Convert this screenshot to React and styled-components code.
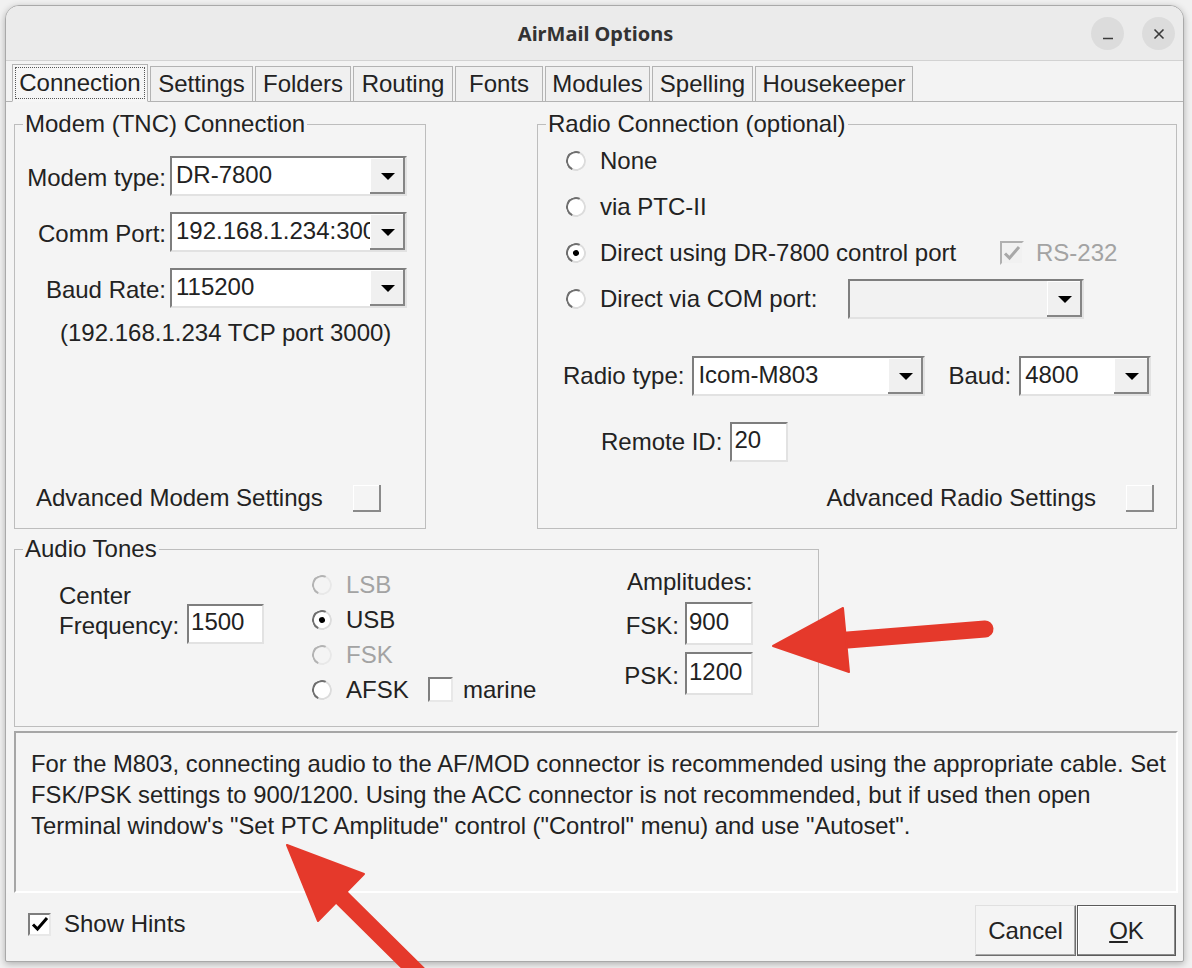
import React from "react";
import styled, { createGlobalStyle } from "styled-components";

const GlobalStyle = createGlobalStyle`
  html, body {
    margin: 0;
    padding: 0;
    background: #f1f1f1;
  }
  body {
    font-family: "Liberation Sans", Arial, sans-serif;
    color: #222;
  }
`;

const Desktop = styled.div`
  position: relative;
  width: 1192px;
  height: 968px;
  overflow: hidden;
  padding: 5px 0 0 5px;
  box-sizing: border-box;
`;

const Window = styled.div`
  width: 1179px;
  height: 957px;
  box-sizing: border-box;
  border: 1px solid #a9a9a9;
  border-radius: 14px 14px 2px 2px;
  background: #f3f3f3;
  box-shadow: 0 2px 7px rgba(0, 0, 0, 0.28);
  display: flex;
  flex-direction: column;
  overflow: hidden;
`;

const TitleBar = styled.div`
  position: relative;
  height: 55px;
  flex: none;
  box-sizing: border-box;
  background: #ebebeb;
  border-bottom: 1px solid #d2d2d2;
  display: flex;
  align-items: center;
  justify-content: center;
`;

const Title = styled.span`
  font-family: "Noto Sans", "Open Sans", sans-serif;
  font-weight: 700;
  font-size: 20px;
  color: #333;
  margin-left: 2px;
`;

const TitleButtons = styled.div`
  position: absolute;
  right: 8px;
  top: 11px;
  display: flex;
  gap: 18px;
`;

const RoundButton = styled.span`
  width: 33px;
  height: 33px;
  border-radius: 50%;
  background: #dcdcdc;
  display: flex;
  align-items: center;
  justify-content: center;
`;

const TabStrip = styled.div`
  height: 40px;
  flex: none;
  display: flex;
  align-items: flex-end;
  gap: 2px;
  padding-left: 6px;
  position: relative;
  z-index: 1;
`;

const Tab = styled.div`
  width: ${(p) => p.$w}px;
  height: ${(p) => (p.$active ? 38 : 35)}px;
  box-sizing: border-box;
  border: 1px solid #b3b3b3;
  border-bottom: ${(p) => (p.$active ? "1px solid #f6f6f6" : "none")};
  margin-bottom: ${(p) => (p.$active ? -1 : 0)}px;
  background: ${(p) => (p.$active ? "#f6f6f6" : "#f0f0f0")};
  font-size: 24px;
  display: flex;
  align-items: center;
  justify-content: center;
  padding: 2px;
`;

const FocusRing = styled.span`
  flex: 1;
  align-self: stretch;
  display: flex;
  align-items: center;
  justify-content: center;
  border: 1px dotted #555;
`;

const TabPage = styled.div`
  border-top: 1px solid #b3b3b3;
  background: #f4f4f4;
  padding: 10px 0 0 8px;
  display: flex;
  flex-direction: column;
  height: 792px;
  box-sizing: border-box;
  flex: none;
`;

const TopRow = styled.div`
  display: flex;
  gap: 111px;
`;

const Group = styled.fieldset`
  margin: ${(p) => p.$mt || 0}px 0 0 0;
  padding: 0;
  min-width: 0;
  width: ${(p) => p.$w}px;
  height: ${(p) => p.$h}px;
  box-sizing: border-box;
  border: 1px solid #bdbdbd;
`;

const Legend = styled.legend`
  font-size: 24px;
  line-height: 24px;
  padding: 0 2px;
  margin-left: 8px;
`;

const GroupBody = styled.div`
  height: ${(p) => p.$h}px;
  display: flex;
  flex-direction: ${(p) => (p.$row ? "row" : "column")};
  align-items: ${(p) => (p.$row ? "flex-start" : "stretch")};
  font-size: 24px;
  white-space: nowrap;
`;

const FieldGrid = styled.div`
  display: grid;
  grid-template-columns: 151px 237px;
  column-gap: 4px;
  row-gap: 16px;
  align-items: center;
  margin-top: 20px;
`;

const FieldLabel = styled.span`
  text-align: right;
  padding-top: 4px;
`;

const Caption = styled.div`
  margin: 12px 0 0 45px;
  line-height: 26px;
`;

const BottomRow = styled.div`
  margin-top: auto;
  padding: 0 ${(p) => p.$pr}px 16px ${(p) => p.$pl || 0}px;
  display: flex;
  align-items: center;
  justify-content: ${(p) => (p.$end ? "flex-end" : "space-between")};
  gap: 30px;
`;

const Combo = styled.div`
  width: ${(p) => p.$w}px;
  height: 40px;
  box-sizing: border-box;
  display: flex;
  border: 2px solid;
  border-color: #7e7e7e #e2e2e2 #e2e2e2 #7e7e7e;
  background: ${(p) => (p.$disabled ? "#f2f2f2" : "#fff")};
`;

const ComboText = styled.span`
  flex: 1;
  min-width: 0;
  overflow: hidden;
  white-space: nowrap;
  padding-left: 4px;
  line-height: 34px;
`;

const ComboButton = styled.span`
  width: 35px;
  flex: none;
  background: #f0f0f0;
  box-shadow: inset -2px -2px 0 #858585, inset 1px 1px 0 #fff;
  display: flex;
  align-items: center;
  justify-content: center;

  &::after {
    content: "";
    border-left: 7px solid transparent;
    border-right: 7px solid transparent;
    border-top: 7px solid #000;
    margin-top: 1px;
  }
`;

const TextBox = styled.div`
  width: ${(p) => p.$w}px;
  height: ${(p) => p.$h || 40}px;
  box-sizing: border-box;
  border: 2px solid;
  border-color: #7e7e7e #e2e2e2 #e2e2e2 #7e7e7e;
  background: #fff;
  padding-left: 2px;
  line-height: ${(p) => (p.$h || 40) - 8}px;
  margin-bottom: ${(p) => p.$mb || 0}px;
`;

const RadioList = styled.div`
  margin: ${(p) => p.$mt}px 0 0 ${(p) => p.$ml}px;
  width: ${(p) => p.$w || "auto"};
  display: flex;
  flex-direction: column;
`;

const OptionRow = styled.div`
  height: ${(p) => p.$h}px;
  display: flex;
  align-items: center;
`;

const RadioDot = styled.span`
  position: relative;
  width: 20px;
  height: 20px;
  flex: none;
  box-sizing: border-box;
  border-radius: 50%;
  border: 2px solid;
  border-color: ${(p) =>
    p.$dim ? "#b3b3b3 #e8e8e8 #e8e8e8 #b3b3b3" : "#6f6f6f #dcdcdc #dcdcdc #6f6f6f"};
  background: ${(p) => (p.$dim ? "#f4f4f4" : "#fff")};
  transform: rotate(-20deg);

  &::after {
    content: "";
    display: ${(p) => (p.$on ? "block" : "none")};
    position: absolute;
    left: 5px;
    top: 5px;
    width: 6px;
    height: 6px;
    border-radius: 50%;
    background: #000;
  }
`;

const OptionText = styled.span`
  margin-left: ${(p) => p.$ml ?? 14}px;
  white-space: nowrap;
  width: ${(p) => (p.$w ? `${p.$w}px` : "auto")};
  color: ${(p) => (p.$dim ? "#a3a3a3" : "inherit")};
`;

const CheckBox = styled.span`
  width: ${(p) => p.$s || 24}px;
  height: ${(p) => p.$s || 24}px;
  flex: none;
  box-sizing: border-box;
  border: 2px solid;
  border-color: ${(p) =>
    p.$dim ? "#b0b0b0 #f4f4f4 #f4f4f4 #b0b0b0" : "#7e7e7e #e8e8e8 #e8e8e8 #7e7e7e"};
  background: ${(p) => (p.$dim ? "#f1f1f1" : "#fff")};
  display: flex;
  align-items: center;
  justify-content: center;
`;

const SquareButton = styled.span`
  width: 28px;
  height: 27px;
  flex: none;
  background: #f4f4f4;
  box-shadow: inset -2px -2px 0 #8a8a8a, inset 1px 1px 0 #fff;
`;

const ControlRow = styled.div`
  display: flex;
  align-items: center;
  margin: ${(p) => p.$mt}px 0 0 ${(p) => p.$ml}px;
  gap: 8px;
`;

const Spacer = styled.span`
  width: ${(p) => p.$w}px;
  flex: none;
`;

const FreqBlock = styled.div`
  width: 253px;
  margin: 20px 0 0 44px;
  display: flex;
  align-items: flex-end;
  gap: 8px;
`;

const FreqLabel = styled.div`
  line-height: 30px;
`;

const AmpBlock = styled.div`
  margin-top: 8px;
  display: grid;
  grid-template-columns: 59px 68px;
  column-gap: 6px;
  row-gap: 7px;
  align-items: center;
`;

const AmpTitle = styled.div`
  grid-column: 1 / span 2;
  line-height: 26px;
  margin-left: 7px;
`;

const HintBox = styled.div`
  margin-top: 4px;
  width: 1164px;
  height: 162px;
  box-sizing: border-box;
  border: 2px solid;
  border-color: #a6a6a6 #fff #fff #a6a6a6;
  background: #f4f4f4;
  padding: 15px 0 0 15px;
  font-size: 23.8px;
  line-height: 31px;
  white-space: nowrap;
`;

const Footer = styled.div`
  flex: 1;
  display: flex;
  justify-content: space-between;
  align-items: flex-start;
  padding: 0 7px 0 22px;
  font-size: 24px;
`;

const ShowHints = styled.label`
  margin-top: 17px;
  display: flex;
  align-items: center;
  gap: 13px;
`;

const ButtonRow = styled.div`
  margin-top: 12px;
  display: flex;
  gap: 1px;
`;

const PushButton = styled.button`
  width: ${(p) => p.$w}px;
  height: 51px;
  font: inherit;
  font-size: 24px;
  color: #222;
  background: #f4f4f4;
  border: 1px solid;
  border-color: ${(p) => (p.$default ? "#5a5a5a" : "#e0e0e0 #6e6e6e #6e6e6e #e0e0e0")};
  box-shadow: ${(p) =>
    p.$default ? "inset -1px -1px 0 #8a8a8a, inset 1px 1px 0 #fff" : "inset -1px -1px 0 #a8a8a8"};
  padding: 0;
`;

const Arrows = styled.svg`
  position: absolute;
  left: 0;
  top: 0;
  pointer-events: none;
`;

const Check = ({ color = "#000" }) => (
  <svg width="18" height="18" viewBox="0 0 18 18">
    <path d="M2 9.5 L6.5 14 L16 3" fill="none" stroke={color} strokeWidth="3" />
  </svg>
);

const Radio = ({ on, dim, label, w }) => (
  <>
    <RadioDot $on={on} $dim={dim} />
    <OptionText $dim={dim} $w={w}>
      {label}
    </OptionText>
  </>
);

const tabs = [
  { label: "Connection", w: 136 },
  { label: "Settings", w: 103 },
  { label: "Folders", w: 96 },
  { label: "Routing", w: 100 },
  { label: "Fonts", w: 88 },
  { label: "Modules", w: 105 },
  { label: "Spelling", w: 101 },
  { label: "Housekeeper", w: 158 },
];

const hintLines = [
  "For the M803, connecting audio to the AF/MOD connector is recommended using the appropriate cable. Set",
  "FSK/PSK settings to 900/1200. Using the ACC connector is not recommended, but if used then open",
  'Terminal window\'s "Set PTC Amplitude" control ("Control" menu) and use "Autoset".',
];

export default function App() {
  return (
    <>
      <GlobalStyle />
      <Desktop>
        <Window>
          <TitleBar>
            <Title>AirMail Options</Title>
            <TitleButtons>
              <RoundButton>
                <svg width="12" height="12" viewBox="0 0 12 12">
                  <path d="M1 10.5 H11" stroke="#3a3a3a" strokeWidth="1.6" />
                </svg>
              </RoundButton>
              <RoundButton>
                <svg width="12" height="12" viewBox="0 0 12 12">
                  <path d="M1.5 1.5 L10.5 10.5 M10.5 1.5 L1.5 10.5" stroke="#3a3a3a" strokeWidth="1.6" />
                </svg>
              </RoundButton>
            </TitleButtons>
          </TitleBar>

          <TabStrip>
            {tabs.map((t, i) => (
              <Tab key={t.label} $w={t.w} $active={i === 0}>
                {i === 0 ? <FocusRing>{t.label}</FocusRing> : t.label}
              </Tab>
            ))}
          </TabStrip>

          <TabPage>
            <TopRow>
              <Group $w={412} $h={417}>
                <Legend>Modem (TNC) Connection</Legend>
                <GroupBody $h={392}>
                  <FieldGrid>
                    <FieldLabel>Modem type:</FieldLabel>
                    <Combo $w={237}>
                      <ComboText>DR-7800</ComboText>
                      <ComboButton />
                    </Combo>
                    <FieldLabel>Comm Port:</FieldLabel>
                    <Combo $w={237}>
                      <ComboText>192.168.1.234:3000</ComboText>
                      <ComboButton />
                    </Combo>
                    <FieldLabel>Baud Rate:</FieldLabel>
                    <Combo $w={237}>
                      <ComboText>115200</ComboText>
                      <ComboButton />
                    </Combo>
                  </FieldGrid>
                  <Caption>(192.168.1.234 TCP port 3000)</Caption>
                  <BottomRow $pl={21} $pr={45}>
                    <span>Advanced Modem Settings</span>
                    <SquareButton />
                  </BottomRow>
                </GroupBody>
              </Group>

              <Group $w={640} $h={417}>
                <Legend>Radio Connection (optional)</Legend>
                <GroupBody $h={392}>
                  <RadioList $mt={2} $ml={28}>
                    <OptionRow $h={46}>
                      <Radio label="None" />
                    </OptionRow>
                    <OptionRow $h={46}>
                      <Radio label="via PTC-II" />
                    </OptionRow>
                    <OptionRow $h={46}>
                      <Radio on label="Direct using DR-7800 control port" w={400} />
                      <CheckBox $dim>
                        <Check color="#a8a8a8" />
                      </CheckBox>
                      <OptionText $dim $ml={12}>
                        RS-232
                      </OptionText>
                    </OptionRow>
                    <OptionRow $h={46}>
                      <Radio label="Direct via COM port:" w={248} />
                      <Combo $w={236} $disabled>
                        <ComboText />
                        <ComboButton />
                      </Combo>
                    </OptionRow>
                  </RadioList>

                  <ControlRow $mt={34} $ml={25}>
                    <span>Radio type:</span>
                    <Combo $w={233}>
                      <ComboText>Icom-M803</ComboText>
                      <ComboButton />
                    </Combo>
                    <Spacer $w={7} />
                    <span>Baud:</span>
                    <Combo $w={132}>
                      <ComboText>4800</ComboText>
                      <ComboButton />
                    </Combo>
                  </ControlRow>

                  <ControlRow $mt={26} $ml={63}>
                    <span>Remote ID:</span>
                    <TextBox $w={58}>20</TextBox>
                  </ControlRow>

                  <BottomRow $end $pr={22}>
                    <span>Advanced Radio Settings</span>
                    <SquareButton />
                  </BottomRow>
                </GroupBody>
              </Group>
            </TopRow>

            <Group $w={805} $h={190} $mt={8}>
              <Legend>Audio Tones</Legend>
              <GroupBody $h={165} $row>
                <FreqBlock>
                  <FreqLabel>
                    Center
                    <br />
                    Frequency:
                  </FreqLabel>
                  <TextBox $w={77} $mb={-3}>
                    1500
                  </TextBox>
                </FreqBlock>

                <RadioList $mt={6} $ml={0} $w="308px">
                  <OptionRow $h={35}>
                    <Radio dim label="LSB" />
                  </OptionRow>
                  <OptionRow $h={35}>
                    <Radio on label="USB" />
                  </OptionRow>
                  <OptionRow $h={35}>
                    <Radio dim label="FSK" />
                  </OptionRow>
                  <OptionRow $h={35}>
                    <Radio label="AFSK" w={82} />
                    <CheckBox $s={25} />
                    <OptionText $ml={10}>marine</OptionText>
                  </OptionRow>
                </RadioList>

                <AmpBlock>
                  <AmpTitle>Amplitudes:</AmpTitle>
                  <FieldLabel>FSK:</FieldLabel>
                  <TextBox $w={68} $h={43}>
                    900
                  </TextBox>
                  <FieldLabel>PSK:</FieldLabel>
                  <TextBox $w={68} $h={43}>
                    1200
                  </TextBox>
                </AmpBlock>
              </GroupBody>
            </Group>

            <HintBox>
              {hintLines.map((line) => (
                <div key={line}>{line}</div>
              ))}
            </HintBox>
          </TabPage>

          <Footer>
            <ShowHints>
              <CheckBox $s={23}>
                <Check />
              </CheckBox>
              Show Hints
            </ShowHints>
            <ButtonRow>
              <PushButton $w={101}>Cancel</PushButton>
              <PushButton $w={99} $default>
                <u>O</u>K
              </PushButton>
            </ButtonRow>
          </Footer>
        </Window>

        <Arrows width="1192" height="968" viewBox="0 0 1192 968">
          <g fill="#e5392b" stroke="#e5392b" strokeLinecap="round" strokeLinejoin="round">
            <path d="M985 629 L835 641" strokeWidth="17" fill="none" />
            <polygon points="773,646 843,608 849,672" strokeWidth="2" />
            <path d="M336 892 L430 985" strokeWidth="17" fill="none" />
            <polygon points="287,845 364,874 318,921" strokeWidth="2" />
          </g>
        </Arrows>
      </Desktop>
    </>
  );
}
